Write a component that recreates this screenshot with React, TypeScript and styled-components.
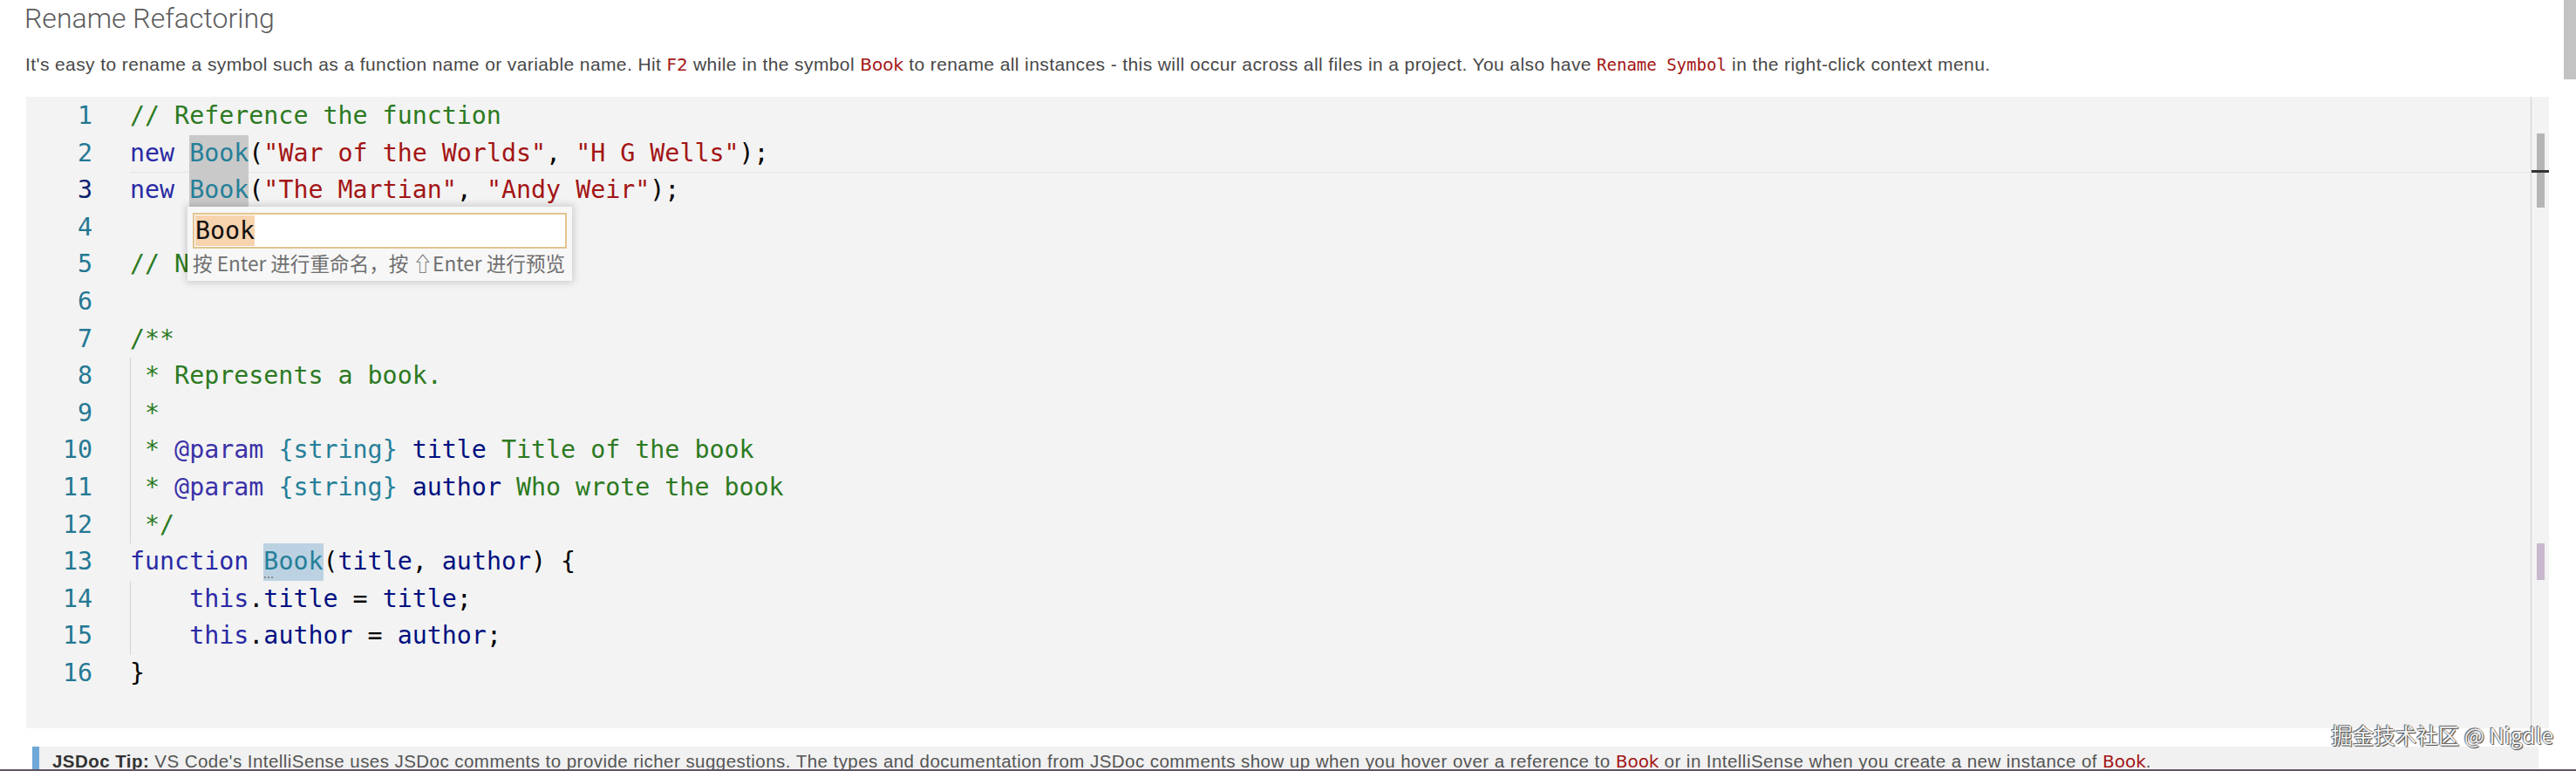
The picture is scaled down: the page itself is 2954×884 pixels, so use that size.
import React from 'react';
import styled, { createGlobalStyle, css } from 'styled-components';

const MONO = `"DejaVu Sans Mono", "Liberation Mono", monospace`;
const SANS = `"Liberation Sans", Arial, sans-serif`;
const LH = 42.6;
const FS = 28.3;

const GlobalStyle = createGlobalStyle`
  html, body { margin: 0; padding: 0; background: #ffffff; }
  body { overflow: hidden; }
`;

const Page = styled.div`
  position: relative;
  width: 2954px;
  height: 884px;
  box-sizing: border-box;
  overflow: hidden;
  background: #ffffff;
  display: flex;
  flex-direction: column;
  border-bottom: 2px solid #5e5462;
  & > * { flex-shrink: 0; }
`;

const Title = styled.h1`
  margin: 2px 0 0 28px;
  font-family: Roboto, "Liberation Sans", sans-serif;
  font-weight: 300;
  font-size: 32px;
  line-height: 38px;
  color: #5c5c5c;
`;

const Desc = styled.p`
  margin: 21px 0 0 29px;
  font-family: ${SANS};
  font-size: 21px;
  letter-spacing: 0.4px;
  line-height: 26px;
  color: #484848;
  white-space: nowrap;
`;

const InlineCode = styled.code<{ $mono?: boolean }>`
  color: #a31515;
  letter-spacing: 0;
  font-family: ${p => (p.$mono ? MONO : `"DejaVu Sans", sans-serif`)};
  font-size: ${p => (p.$mono ? '19px' : '20px')};
`;

const Editor = styled.div`
  margin: 24px 0 0 30px;
  width: 2893px;
  height: 724px;
  background: #f3f3f3;
  display: flex;
`;

const Gutter = styled.div`
  width: 119px;
  box-sizing: border-box;
  padding: 1px 43px 0 0;
  text-align: right;
  font-family: ${MONO};
  font-size: ${FS}px;
  line-height: ${LH}px;
`;

const LineNo = styled.div<{ $active?: boolean }>`
  height: ${LH}px;
  color: ${p => (p.$active ? '#0b216f' : '#237893')};
`;

const CodeArea = styled.div`
  position: relative;
  flex: 1;
  padding-top: 1px;
  font-family: ${MONO};
  font-size: ${FS}px;
  line-height: ${LH}px;
  white-space: pre;
  color: #000000;
`;

const Line = styled.div<{ $guide?: boolean; $current?: boolean }>`
  position: relative;
  height: ${LH}px;
  ${p =>
    p.$guide &&
    css`
      &::before {
        content: '';
        position: absolute;
        left: 0;
        top: 0;
        bottom: 0;
        width: 1px;
        background: #d3d3d3;
      }
    `}
  ${p =>
    p.$current &&
    css`
      box-shadow: inset 0 1px 0 #e3e3e3;
    `}
`;

const Tok = styled.span<{ $c: string; $bg?: string; $dots?: boolean }>`
  color: ${p => p.$c};
  ${p =>
    p.$bg &&
    css`
      position: relative;
      display: inline-block;
      vertical-align: top;
      height: ${LH}px;
      background: ${p.$bg};
    `}
  ${p =>
    p.$dots &&
    css`
      &::after {
        content: '';
        position: absolute;
        left: 1px;
        bottom: 3px;
        width: 10px;
        border-bottom: 2px dotted #8a8a8a;
      }
    `}
`;

const RenameWidget = styled.div`
  position: absolute;
  left: 66px;
  top: 126px;
  width: 441px;
  height: 85px;
  box-sizing: border-box;
  padding: 7px 6px 0;
  background: #f7f7f7;
  box-shadow: 0 0 8px 2px rgba(0, 0, 0, 0.16);
  white-space: nowrap;
`;

const RenameInput = styled.div`
  height: 41px;
  box-sizing: border-box;
  border: 2px solid #e2c48f;
  background: #ffffff;
  padding: 0 0 0 1px;
  display: flex;
  align-items: center;
`;

const Selected = styled.span`
  display: inline-block;
  height: 35px;
  line-height: 35px;
  background: #f7d3ae;
  color: #111111;
  font-family: ${MONO};
  font-size: ${FS}px;
`;

const Hint = styled.div`
  margin-top: 4px;
  font-family: "Noto Sans CJK SC", "Liberation Sans", sans-serif;
  font-size: 22.6px;
  line-height: 26px;
  color: #6f6f6f;
`;

const Ruler = styled.div`
  position: relative;
  width: 20px;
  border-left: 1px solid #cfcfcf;
`;

const Mark = styled.div<{ $top: number; $h: number; $left: number; $w: number; $color: string }>`
  position: absolute;
  top: ${p => p.$top}px;
  left: ${p => p.$left}px;
  width: ${p => p.$w}px;
  height: ${p => p.$h}px;
  background: ${p => p.$color};
`;

const Tip = styled.div`
  margin: 21px 0 0 37px;
  width: 2874px;
  height: 40px;
  box-sizing: border-box;
  border-left: 8px solid #6fa8d8;
  background: #f1f1f1;
  padding: 4px 0 0 15px;
  font-family: ${SANS};
  font-size: 20.5px;
  letter-spacing: 0.45px;
  line-height: 25px;
  color: #555555;
  white-space: nowrap;
`;

const TipLabel = styled.strong`
  color: #333333;
  font-weight: 700;
`;

const Watermark = styled.div`
  position: absolute;
  right: 26px;
  top: 826px;
  font-family: "Noto Sans CJK SC", "Noto Sans", sans-serif;
  font-size: 24.5px;
  line-height: 34px;
  color: #f4f4f4;
  text-shadow: 0 0 1px #333, 1px 1px 1px #444, -1px -1px 1px #666;
`;

const PageScroll = styled.div`
  position: absolute;
  right: 0;
  top: 0;
  width: 14px;
  height: 91px;
  background: #c3c3c3;
`;

const C = '#2c7a22';
const K = '#2a2aa5';
const S = '#a31515';
const T = '#267f99';
const V = '#001080';
const P = '#000000';
const J = '#3b31a8';

type Piece = [string, string, string?, boolean?];
type LineDef = { toks: Piece[]; guide?: boolean; current?: boolean };

const GRAY = '#c9c9c9';
const BLUE = '#bcd2e2';

const lines: LineDef[] = [
  { toks: [['// Reference the function', C]] },
  {
    toks: [
      ['new', K], [' ', P], ['Book', T, GRAY], ['(', P], ['"War of the Worlds"', S], [', ', P],
      ['"H G Wells"', S], [');', P],
    ],
  },
  {
    current: true,
    toks: [
      ['new', K], [' ', P], ['Book', T, GRAY], ['(', P], ['"The Martian"', S], [', ', P],
      ['"Andy Weir"', S], [');', P],
    ],
  },
  { toks: [] },
  { toks: [['// N', C]] },
  { toks: [] },
  { toks: [['/**', C]] },
  { guide: true, toks: [[' * Represents a book.', C]] },
  { guide: true, toks: [[' *', C]] },
  {
    guide: true,
    toks: [[' * ', C], ['@param', J], [' ', C], ['{string}', T], [' ', C], ['title', V], [' Title of the book', C]],
  },
  {
    guide: true,
    toks: [[' * ', C], ['@param', J], [' ', C], ['{string}', T], [' ', C], ['author', V], [' Who wrote the book', C]],
  },
  { guide: true, toks: [[' */', C]] },
  {
    toks: [
      ['function', K], [' ', P], ['Book', T, BLUE, true], ['(', P], ['title', V], [', ', P], ['author', V],
      [') {', P],
    ],
  },
  { guide: true, toks: [['    ', P], ['this', K], ['.', P], ['title', V], [' = ', P], ['title', V], [';', P]] },
  { guide: true, toks: [['    ', P], ['this', K], ['.', P], ['author', V], [' = ', P], ['author', V], [';', P]] },
  { toks: [['}', P]] },
];

export default function App() {
  return (
    <>
      <GlobalStyle />
      <Page>
        <Title>Rename Refactoring</Title>
        <Desc>
          It's easy to rename a symbol such as a function name or variable name. Hit{' '}
          <InlineCode>F2</InlineCode> while in the symbol <InlineCode>Book</InlineCode> to rename all instances - this
          will occur across all files in a project. You also have <InlineCode $mono>Rename Symbol</InlineCode> in the
          right-click context menu.
        </Desc>
        <Editor>
          <Gutter>
            {lines.map((_, i) => (
              <LineNo key={i} $active={i === 2}>
                {i + 1}
              </LineNo>
            ))}
          </Gutter>
          <CodeArea>
            {lines.map((l, i) => (
              <Line key={i} $guide={l.guide} $current={l.current}>
                {l.toks.map((t, j) => (
                  <Tok key={j} $c={t[1]} $bg={t[2]} $dots={t[3]}>
                    {t[0]}
                  </Tok>
                ))}
              </Line>
            ))}
            <RenameWidget>
              <RenameInput>
                <Selected>Book</Selected>
              </RenameInput>
              <Hint>按 Enter 进行重命名，按 ⇧Enter 进行预览</Hint>
            </RenameWidget>
          </CodeArea>
          <Ruler>
            <Mark $top={42} $h={85} $left={6} $w={9} $color="#b5b5b5" />
            <Mark $top={84} $h={3} $left={0} $w={20} $color="#333333" />
            <Mark $top={512} $h={42} $left={6} $w={9} $color="#c8b8cd" />
          </Ruler>
        </Editor>
        <Tip>
          <TipLabel>JSDoc Tip:</TipLabel> VS Code's IntelliSense uses JSDoc comments to provide richer suggestions. The
          types and documentation from JSDoc comments show up when you hover over a reference to{' '}
          <InlineCode>Book</InlineCode> or in IntelliSense when you create a new instance of{' '}
          <InlineCode>Book</InlineCode>.
        </Tip>
        <Watermark>掘金技术社区 @ Nigdle</Watermark>
        <PageScroll />
      </Page>
    </>
  );
}
